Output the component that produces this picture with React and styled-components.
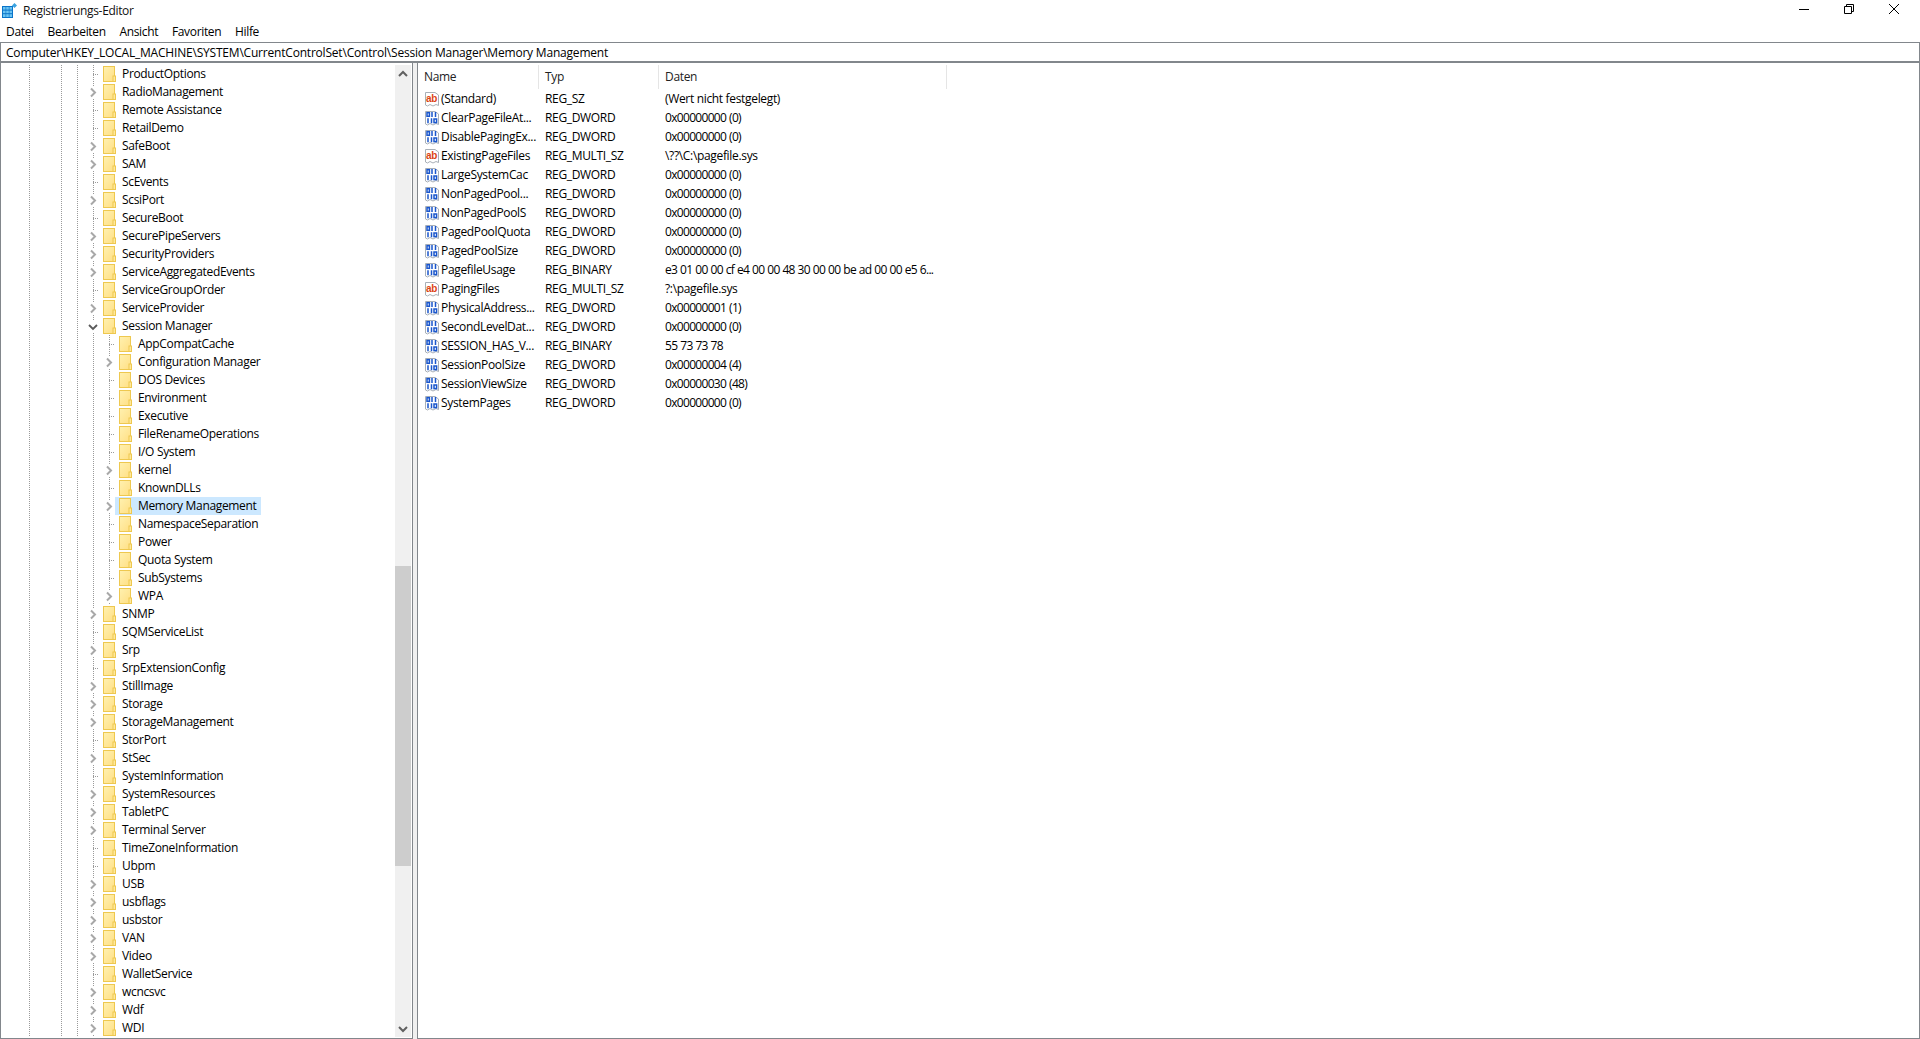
import React from 'react';
import styled, { createGlobalStyle } from 'styled-components';

const Global = createGlobalStyle`
  html, body { margin: 0; padding: 0; background: #fff; overflow: hidden; }
  #root { height: 100vh; }
`;

const Window = styled.div`
  height: 1039px; display: flex; flex-direction: column; overflow: hidden;
  font: 12px/16px "Open Sans", "Noto Sans", sans-serif; letter-spacing: -0.33px; color: #000; background: #fff;
`;
const TitleBar = styled.div`height: 21px; display: flex; align-items: center; padding: 0 4px 0 2px;`;
const AppIcon = styled.svg`width: 15px; height: 15px; flex: none; margin-top: 0;`;
const Title = styled.div`margin-left: 6px; flex: 1; color: #111; padding-top: 1px;`;
const WinButton = styled.div`width: 45px; height: 21px; display: flex; align-items: flex-start; justify-content: center; padding-top: 4px; box-sizing: border-box;`;
const MenuBar = styled.div`height: 21px; display: flex; align-items: center; padding-left: 6px; padding-top: 1px; box-sizing: border-box; gap: 13.7px;`;
const MenuItem = styled.div``;
const AddressBar = styled.div`
  height: 21px; box-sizing: border-box; border: 1px solid #82878c; border-bottom-width: 2px;
  padding: 1px 0 0 5px; display: flex; align-items: center; white-space: nowrap; letter-spacing: -0.2px;
`;
const Body = styled.div`flex: 1; min-height: 0; display: flex; background: #f0f0f0;`;
const TreePane = styled.div`
  width: 413px; flex: none; box-sizing: border-box; display: flex; background: #fff;
  border: 1px solid #82878c; border-top: 0; overflow: hidden;
`;
const Tree = styled.div`flex: 1; min-width: 0; padding-top: 2px; overflow: hidden;`;
const Row = styled.div`height: 18px; display: flex; padding-left: 4px; white-space: nowrap;`;
const dots = '#9a9a9a';
const Guide = styled.div`
  width: 16px; height: 18px; flex: none;
  background-image: ${p => p.$on ? `repeating-linear-gradient(to bottom, ${dots} 0 1px, transparent 1px 2px)` : 'none'};
  background-size: 1px 100%; background-position: 8px 0; background-repeat: no-repeat;
`;
const Expander = styled.div`
  width: 14px; height: 18px; flex: none;
  background-image: repeating-linear-gradient(to bottom, ${dots} 0 1px, transparent 1px 2px),
    repeating-linear-gradient(to right, ${dots} 0 1px, transparent 1px 2px);
  background-size: 1px 100%, 6px 1px; background-position: 8px 0, 8px 9px; background-repeat: no-repeat;
  display: flex; align-items: center;
`;
const Chevron = styled.svg`width: 14px; height: 14px; display: block; margin-top: 2px;`;
const Node = styled.div`
  height: 18px; display: flex; align-items: center; padding: 0 4px; gap: 6px;
  background: ${p => p.$selected ? '#cce8ff' : 'transparent'};
`;
const FolderSvg = styled.svg`width: 13px; height: 16px; flex: none; display: block;`;

const Scrollbar = styled.div`width: 16px; flex: none; margin: 2px 1px 1px 0; background: #f0f0f0; display: flex; flex-direction: column;`;
const ScrollArrow = styled.div`height: 17px; flex: none; display: flex; align-items: center; justify-content: center;`;
const Track = styled.div`flex: 1; min-height: 0; padding-top: 484px; box-sizing: border-box;`;
const Thumb = styled.div`height: 300px; background: #cdcdcd;`;

const Splitter = styled.div`width: 4px; flex: none;`;
const ListPane = styled.div`
  flex: 1; min-width: 0; box-sizing: border-box; background: #fff; overflow: hidden;
  border: 1px solid #82878c; border-top: 0; padding-top: 2px;
`;
const columns = '121px 120px 288px';
const Columns = styled.div`display: grid; grid-template-columns: ${columns};`;
const HeaderCell = styled.div`
  height: 24px; box-sizing: border-box; padding-left: 6px; border-right: 1px solid #e5e5e5;
  display: flex; align-items: center; color: #222;
`;
const ListRow = styled.div`display: grid; grid-template-columns: ${columns}; height: 19px;`;
const NameCell = styled.div`display: flex; align-items: center; padding-left: 6px; gap: 1px; white-space: nowrap; overflow: hidden;`;
const ValueCell = styled.div`
  display: flex; align-items: center; padding-left: 6px; white-space: pre; overflow: hidden;
  letter-spacing: ${p => p.$hex ? '-0.68px' : 'inherit'};
  word-spacing: ${p => p.$hex ? '0.4px' : '0'};
`;
const RegSvg = styled.svg`width: 16px; height: 16px; flex: none; display: block;`;
const AbText = styled.text`font: 700 10px "Liberation Sans", sans-serif; letter-spacing: -0.3px; fill: #dc4314;`;

const Folder = () => (
  <FolderSvg viewBox="0 0 13 16">
    <defs>
      <linearGradient id="fg" x1="0" y1="0" x2="1" y2="1">
        <stop offset="0" stopColor="#fff1b0" />
        <stop offset="1" stopColor="#ffdf84" />
      </linearGradient>
    </defs>
    <rect x="0.5" y="0.5" width="11" height="15" fill="url(#fg)" stroke="#eec84f" />
    <rect x="10" y="10" width="2.5" height="5.5" fill="#ffe89c" stroke="#eec84f" />
  </FolderSvg>
);

const ChevronIcon = ({ open }) => (
  <Chevron viewBox="0 0 14 14">
    <rect x="1" y="1" width="13" height="12" fill="#fff" />
    {open
      ? <polyline points="4,5 8,9 12,5" fill="none" stroke="#5a5a5a" strokeWidth="1.8" />
      : <polyline points="6,2.5 10,6.5 6,10.5" fill="none" stroke="#a8a8a8" strokeWidth="2" />}
  </Chevron>
);

const Paper = () => (
  <path d="M1.5 1.5H11L14.5 4V14.5L12 13.5L9 15L6 13.5L3.5 15L1.5 14Z" fill="#fff" stroke="#a9b0b8" />
);
const AbIcon = () => (
  <RegSvg viewBox="0 0 16 16">
    <Paper />
    <AbText x="2" y="10.5">ab</AbText>
  </RegSvg>
);
const BinIcon = () => (
  <RegSvg viewBox="0 0 16 16">
    <Paper />
    <g fill="none" stroke="#1a56cc" strokeWidth="1.5">
      <rect x="3" y="2.7" width="2.4" height="3.6" />
      <path d="M8 2V7M11.5 2V7" />
      <path d="M4 8.2V13.2M7.5 8.2V13.2" />
      <rect x="10" y="9" width="2.6" height="3.6" />
    </g>
  </RegSvg>
);

// [name, level, kind]  kind: c = collapsed, o = open, l = leaf
const nodes = [
  ['ProductOptions', 0, 'l'], ['RadioManagement', 0, 'c'], ['Remote Assistance', 0, 'l'], ['RetailDemo', 0, 'l'],
  ['SafeBoot', 0, 'c'], ['SAM', 0, 'c'], ['ScEvents', 0, 'l'], ['ScsiPort', 0, 'c'], ['SecureBoot', 0, 'l'],
  ['SecurePipeServers', 0, 'c'], ['SecurityProviders', 0, 'c'], ['ServiceAggregatedEvents', 0, 'c'],
  ['ServiceGroupOrder', 0, 'l'], ['ServiceProvider', 0, 'c'], ['Session Manager', 0, 'o'],
  ['AppCompatCache', 1, 'l'], ['Configuration Manager', 1, 'c'], ['DOS Devices', 1, 'l'], ['Environment', 1, 'l'],
  ['Executive', 1, 'l'], ['FileRenameOperations', 1, 'l'], ['I/O System', 1, 'l'], ['kernel', 1, 'c'],
  ['KnownDLLs', 1, 'l'], ['Memory Management', 1, 'c', true], ['NamespaceSeparation', 1, 'l'], ['Power', 1, 'l'],
  ['Quota System', 1, 'l'], ['SubSystems', 1, 'l'], ['WPA', 1, 'c'],
  ['SNMP', 0, 'c'], ['SQMServiceList', 0, 'l'], ['Srp', 0, 'c'], ['SrpExtensionConfig', 0, 'l'], ['StillImage', 0, 'c'],
  ['Storage', 0, 'c'], ['StorageManagement', 0, 'c'], ['StorPort', 0, 'l'], ['StSec', 0, 'c'],
  ['SystemInformation', 0, 'l'], ['SystemResources', 0, 'c'], ['TabletPC', 0, 'c'], ['Terminal Server', 0, 'c'],
  ['TimeZoneInformation', 0, 'l'], ['Ubpm', 0, 'l'], ['USB', 0, 'c'], ['usbflags', 0, 'c'], ['usbstor', 0, 'c'],
  ['VAN', 0, 'c'], ['Video', 0, 'c'], ['WalletService', 0, 'l'], ['wcncsvc', 0, 'c'], ['Wdf', 0, 'c'], ['WDI', 0, 'c'],
];

const values = [
  ['(Standard)', 'REG_SZ', '(Wert nicht festgelegt)', 'ab'],
  ['ClearPageFileAt...', 'REG_DWORD', '0x00000000 (0)'],
  ['DisablePagingEx...', 'REG_DWORD', '0x00000000 (0)'],
  ['ExistingPageFiles', 'REG_MULTI_SZ', '\\??\\C:\\pagefile.sys', 'ab'],
  ['LargeSystemCac', 'REG_DWORD', '0x00000000 (0)'],
  ['NonPagedPool...', 'REG_DWORD', '0x00000000 (0)'],
  ['NonPagedPoolS', 'REG_DWORD', '0x00000000 (0)'],
  ['PagedPoolQuota', 'REG_DWORD', '0x00000000 (0)'],
  ['PagedPoolSize', 'REG_DWORD', '0x00000000 (0)'],
  ['PagefileUsage', 'REG_BINARY', 'e3 01 00 00 cf e4 00 00 48 30 00 00 be ad 00 00 e5 6...'],
  ['PagingFiles', 'REG_MULTI_SZ', '?:\\pagefile.sys', 'ab'],
  ['PhysicalAddress...', 'REG_DWORD', '0x00000001 (1)'],
  ['SecondLevelDat...', 'REG_DWORD', '0x00000000 (0)'],
  ['SESSION_HAS_V...', 'REG_BINARY', '55 73 73 78'],
  ['SessionPoolSize', 'REG_DWORD', '0x00000004 (4)'],
  ['SessionViewSize', 'REG_DWORD', '0x00000030 (48)'],
  ['SystemPages', 'REG_DWORD', '0x00000000 (0)'],
];

const baseGuides = [false, true, false, true, true];
const isHex = s => /^(0x|[0-9a-f]{2} )/.test(s);

export default function App() {
  return (
    <Window>
      <Global />
      <TitleBar>
        <AppIcon viewBox="0 0 15 15">
          <rect x="0" y="3" width="11" height="12" fill="#0a74c9" />
          <g fill="#6cc4f2">
            <rect x="1" y="4" width="2.6" height="2.6" /><rect x="4.2" y="4" width="2.6" height="2.6" /><rect x="7.4" y="4" width="2.6" height="2.6" />
            <rect x="1" y="7.6" width="2.6" height="2.6" /><rect x="4.2" y="7.6" width="2.6" height="2.6" /><rect x="7.4" y="7.6" width="2.6" height="2.6" />
            <rect x="1" y="11.2" width="2.6" height="2.8" /><rect x="4.2" y="11.2" width="2.6" height="2.8" /><rect x="7.4" y="11.2" width="2.6" height="2.8" />
          </g>
          <path d="M12.5 0L15 2.5L12.5 5L10 2.5Z" fill="#3ba3e0" />
        </AppIcon>
        <Title>Registrierungs-Editor</Title>
        <WinButton>
          <svg width="10" height="10" viewBox="0 0 10 10"><path d="M0 5.5H10" stroke="#000" /></svg>
        </WinButton>
        <WinButton>
          <svg width="10" height="10" viewBox="0 0 10 10"><path d="M0.5 2.5H7.5V9.5H0.5ZM2.5 2.5V0.5H9.5V7.5H7.5" fill="none" stroke="#000" /></svg>
        </WinButton>
        <WinButton>
          <svg width="10" height="10" viewBox="0 0 10 10"><path d="M0 0L10 10M10 0L0 10" stroke="#000" /></svg>
        </WinButton>
      </TitleBar>
      <MenuBar>
        {['Datei', 'Bearbeiten', 'Ansicht', 'Favoriten', 'Hilfe'].map(m => <MenuItem key={m}>{m}</MenuItem>)}
      </MenuBar>
      <AddressBar>Computer\HKEY_LOCAL_MACHINE\SYSTEM\CurrentControlSet\Control\Session Manager\Memory Management</AddressBar>
      <Body>
        <TreePane>
          <Tree>
            {nodes.map(([name, level, kind, selected]) => (
              <Row key={name}>
                {baseGuides.map((on, i) => <Guide key={i} $on={on} />)}
                {level === 1 && <Guide $on />}
                <Expander>{kind !== 'l' && <ChevronIcon open={kind === 'o'} />}</Expander>
                <Node $selected={selected}>
                  <Folder />
                  <span>{name}</span>
                </Node>
              </Row>
            ))}
          </Tree>
          <Scrollbar>
            <ScrollArrow>
              <svg width="10" height="8" viewBox="0 0 10 8"><path d="M1 6L5 2L9 6" fill="none" stroke="#606060" strokeWidth="2" /></svg>
            </ScrollArrow>
            <Track><Thumb /></Track>
            <ScrollArrow>
              <svg width="10" height="8" viewBox="0 0 10 8"><path d="M1 2L5 6L9 2" fill="none" stroke="#606060" strokeWidth="2" /></svg>
            </ScrollArrow>
          </Scrollbar>
        </TreePane>
        <Splitter />
        <ListPane>
          <Columns>
            <HeaderCell>Name</HeaderCell>
            <HeaderCell>Typ</HeaderCell>
            <HeaderCell>Daten</HeaderCell>
          </Columns>
          {values.map(([name, type, data, icon]) => (
            <ListRow key={name}>
              <NameCell>{icon === 'ab' ? <AbIcon /> : <BinIcon />}<span>{name}</span></NameCell>
              <ValueCell>{type}</ValueCell>
              <ValueCell $hex={isHex(data)}>{data}</ValueCell>
            </ListRow>
          ))}
        </ListPane>
      </Body>
    </Window>
  );
}
